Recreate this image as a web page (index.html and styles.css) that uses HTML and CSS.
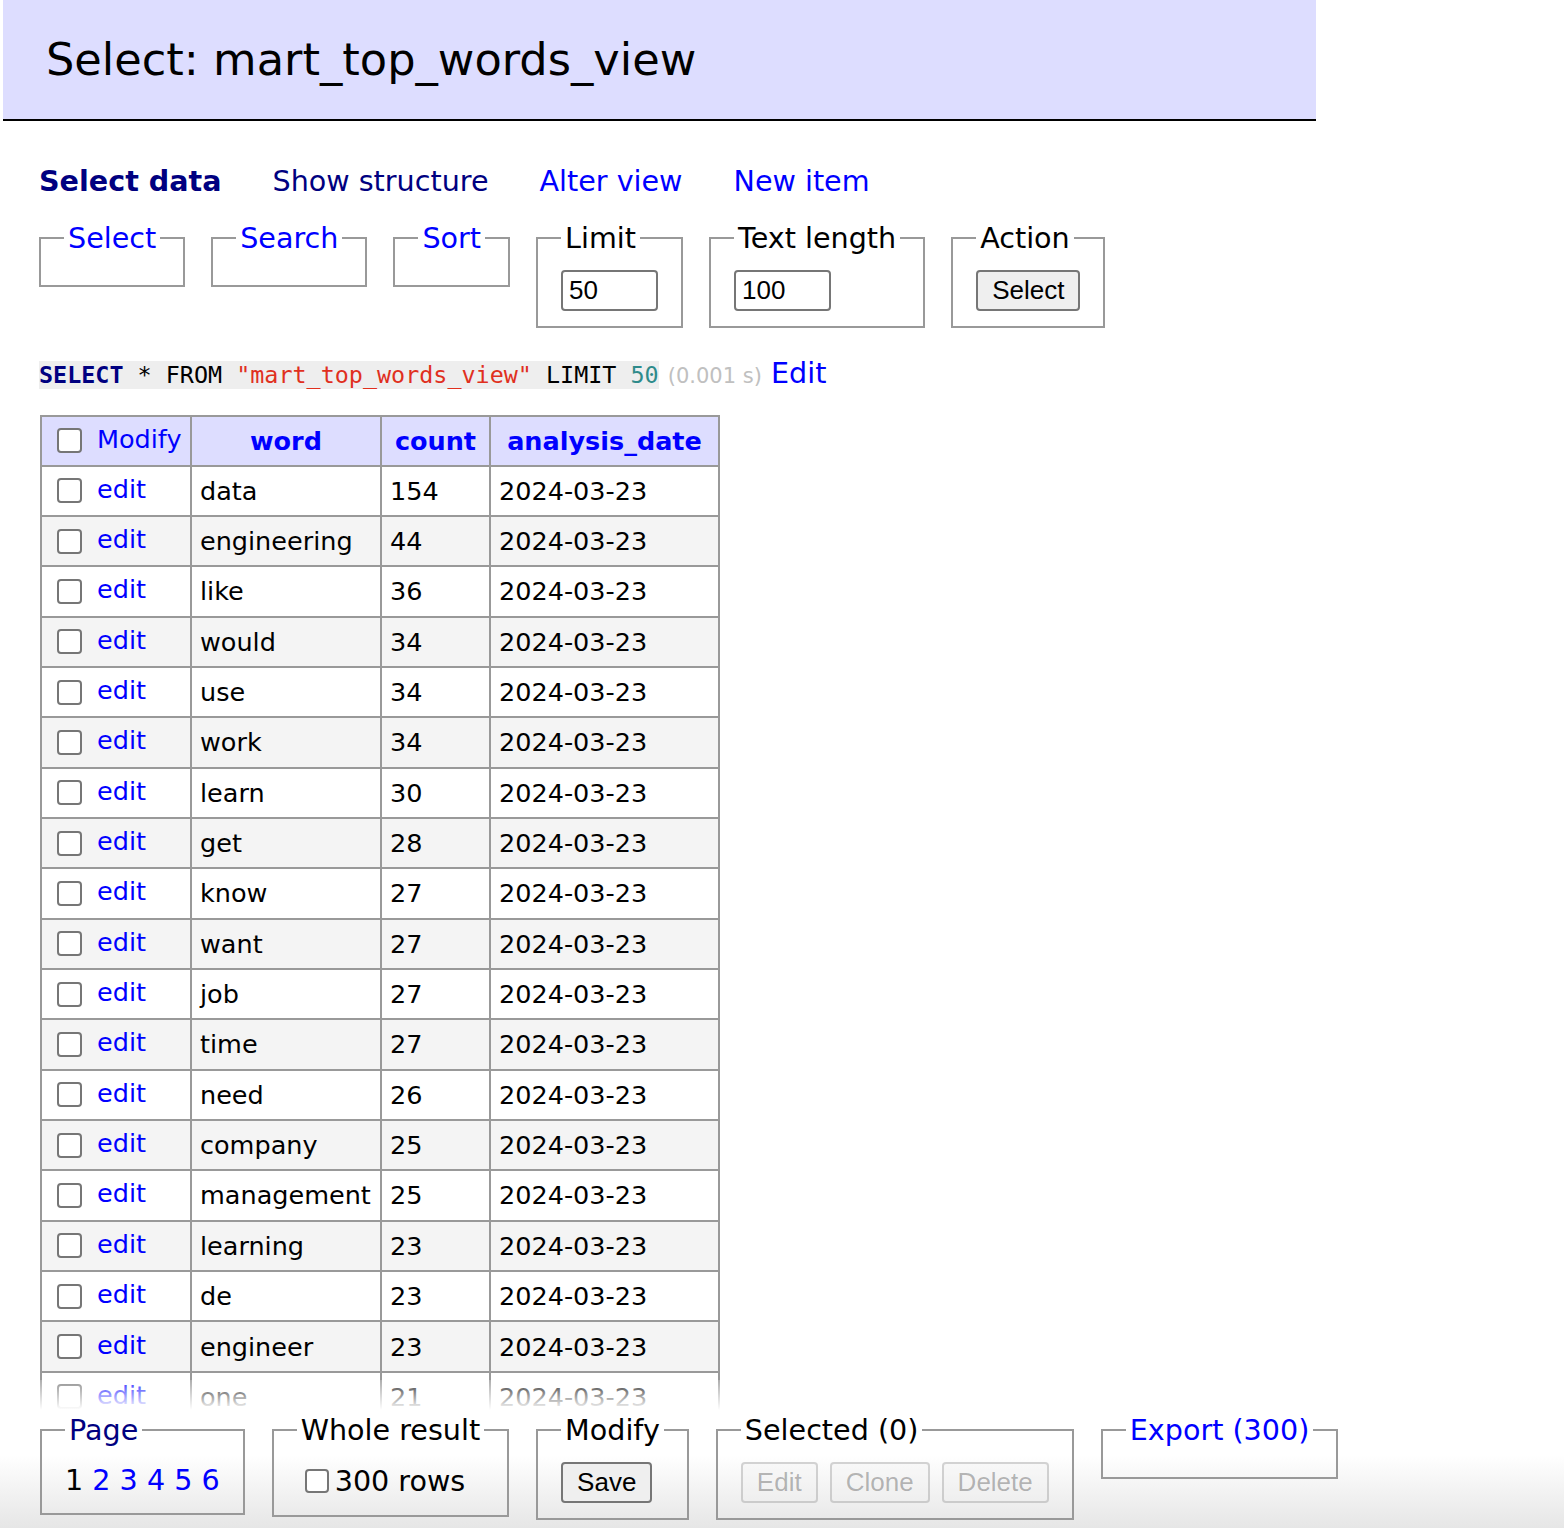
FILE: index.html
```html
<!DOCTYPE html>
<html lang="en">
<head>
<meta charset="utf-8">
<title>Select: mart_top_words_view</title>
<link rel="stylesheet" href="styles.css">
</head>
<body>
<div class="page">
  <h2 class="title">Select: mart_top_words_view</h2>
  <div class="main">
    <p class="links">
      <a href="#" class="visited active">Select data</a>
      <a href="#" class="visited">Show structure</a>
      <a href="#">Alter view</a>
      <a href="#">New item</a>
    </p>
    <form class="filters">
      <fieldset><legend><a href="#">Select</a></legend></fieldset>
      <fieldset><legend><a href="#">Search</a></legend></fieldset>
      <fieldset><legend><a href="#">Sort</a></legend></fieldset>
      <fieldset><legend>Limit</legend><div class="fc"><input class="txt" type="text" value="50"></div></fieldset>
      <fieldset><legend>Text length</legend><div class="fc"><input class="txt" type="text" value="100"></div></fieldset>
      <fieldset><legend>Action</legend><div class="fc"><button type="button" class="btn">Select</button></div></fieldset>
    </form>
    <p class="sql"><code><span class="kw">SELECT</span> * FROM <span class="str">"mart_top_words_view"</span> LIMIT <span class="num">50</span></code> <span class="time">(0.001 s)</span> <a href="#">Edit</a></p>
    <table class="data">
      <colgroup><col class="c1"><col class="c2"><col class="c3"><col class="c4"></colgroup>
      <thead>
        <tr>
          <th class="mod"><span class="cell"><input type="checkbox" class="cb"><a href="#">Modify</a></span></th>
          <th><a href="#">word</a></th>
          <th><a href="#">count</a></th>
          <th><a href="#">analysis_date</a></th>
        </tr>
      </thead>
      <tbody>
        <tr><td class="mod"><span class="cell"><input type="checkbox" class="cb"><a href="#">edit</a></span></td><td>data</td><td>154</td><td>2024-03-23</td></tr>
        <tr><td class="mod"><span class="cell"><input type="checkbox" class="cb"><a href="#">edit</a></span></td><td>engineering</td><td>44</td><td>2024-03-23</td></tr>
        <tr><td class="mod"><span class="cell"><input type="checkbox" class="cb"><a href="#">edit</a></span></td><td>like</td><td>36</td><td>2024-03-23</td></tr>
        <tr><td class="mod"><span class="cell"><input type="checkbox" class="cb"><a href="#">edit</a></span></td><td>would</td><td>34</td><td>2024-03-23</td></tr>
        <tr><td class="mod"><span class="cell"><input type="checkbox" class="cb"><a href="#">edit</a></span></td><td>use</td><td>34</td><td>2024-03-23</td></tr>
        <tr><td class="mod"><span class="cell"><input type="checkbox" class="cb"><a href="#">edit</a></span></td><td>work</td><td>34</td><td>2024-03-23</td></tr>
        <tr><td class="mod"><span class="cell"><input type="checkbox" class="cb"><a href="#">edit</a></span></td><td>learn</td><td>30</td><td>2024-03-23</td></tr>
        <tr><td class="mod"><span class="cell"><input type="checkbox" class="cb"><a href="#">edit</a></span></td><td>get</td><td>28</td><td>2024-03-23</td></tr>
        <tr><td class="mod"><span class="cell"><input type="checkbox" class="cb"><a href="#">edit</a></span></td><td>know</td><td>27</td><td>2024-03-23</td></tr>
        <tr><td class="mod"><span class="cell"><input type="checkbox" class="cb"><a href="#">edit</a></span></td><td>want</td><td>27</td><td>2024-03-23</td></tr>
        <tr><td class="mod"><span class="cell"><input type="checkbox" class="cb"><a href="#">edit</a></span></td><td>job</td><td>27</td><td>2024-03-23</td></tr>
        <tr><td class="mod"><span class="cell"><input type="checkbox" class="cb"><a href="#">edit</a></span></td><td>time</td><td>27</td><td>2024-03-23</td></tr>
        <tr><td class="mod"><span class="cell"><input type="checkbox" class="cb"><a href="#">edit</a></span></td><td>need</td><td>26</td><td>2024-03-23</td></tr>
        <tr><td class="mod"><span class="cell"><input type="checkbox" class="cb"><a href="#">edit</a></span></td><td>company</td><td>25</td><td>2024-03-23</td></tr>
        <tr><td class="mod"><span class="cell"><input type="checkbox" class="cb"><a href="#">edit</a></span></td><td>management</td><td>25</td><td>2024-03-23</td></tr>
        <tr><td class="mod"><span class="cell"><input type="checkbox" class="cb"><a href="#">edit</a></span></td><td>learning</td><td>23</td><td>2024-03-23</td></tr>
        <tr><td class="mod"><span class="cell"><input type="checkbox" class="cb"><a href="#">edit</a></span></td><td>de</td><td>23</td><td>2024-03-23</td></tr>
        <tr><td class="mod"><span class="cell"><input type="checkbox" class="cb"><a href="#">edit</a></span></td><td>engineer</td><td>23</td><td>2024-03-23</td></tr>
        <tr><td class="mod"><span class="cell"><input type="checkbox" class="cb"><a href="#">edit</a></span></td><td>one</td><td>21</td><td>2024-03-23</td></tr>
      </tbody>
    </table>
  </div>
  <div class="footer">
    <fieldset><legend><a href="#" class="visited">Page</a></legend><div class="fc pages">1 <a href="#">2</a> <a href="#">3</a> <a href="#">4</a> <a href="#">5</a> <a href="#">6</a></div></fieldset>
    <fieldset><legend>Whole result</legend><div class="fc"><label class="whole"><input type="checkbox" class="cb cb-w">300 rows</label></div></fieldset>
    <fieldset><legend>Modify</legend><div class="fc"><button type="button" class="btn">Save</button></div></fieldset>
    <fieldset><legend>Selected (0)</legend><div class="fc"><button type="button" class="btn" disabled>Edit</button><button type="button" class="btn" disabled>Clone</button><button type="button" class="btn" disabled>Delete</button></div></fieldset>
    <fieldset><legend><a href="#">Export (300)</a></legend></fieldset>
  </div>
</div>
</body>
</html>
```
FILE: styles.css
```css
* { box-sizing: border-box; }
html, body { margin: 0; padding: 0; background: #fff; }
body {
  font-family: "DejaVu Sans", Verdana, sans-serif;
  font-size: 28.6px;
  line-height: 36px;
  color: #000;
}
a { color: #00f; text-decoration: none; }
a.visited { color: #000080; }

.page {
  height: 1528px;
  display: flex;
  flex-direction: column;
  overflow: hidden;
}

.title {
  flex: none;
  margin: 0 0 0 3px;
  width: 1313px;
  height: 121px;
  padding: 33px 43px 0;
  background: #ddf;
  border-bottom: 2px solid #000;
  font-size: 44.7px;
  line-height: 54px;
  font-weight: normal;
}

.main {
  flex: 1;
  min-height: 0;
  overflow: hidden;
  padding-left: 39px;
}

.links {
  margin: 42px 0 0;
  display: flex;
  gap: 51px;
}
.links .active { font-weight: bold; }

.filters {
  display: flex;
  align-items: flex-start;
  gap: 26px;
  margin-top: 21px;
}

fieldset {
  margin: 0;
  min-width: 0;
  border: 2px solid #999;
  padding: 14px 23px 15px;
}
legend {
  padding: 0 4px;
  line-height: 36px;
}

.fc {
  display: flex;
  align-items: center;
  gap: 12px;
}

.txt {
  width: 97px;
  height: 41px;
  padding: 0 6px;
  font: 26px "Liberation Sans", Arial, sans-serif;
  color: #000;
  border: 2px solid #767676;
  border-radius: 4px;
  background: #fff;
}

.btn {
  height: 41px;
  padding: 0 14px;
  font: 26px "Liberation Sans", Arial, sans-serif;
  color: #000;
  background: #efefef;
  border: 2px solid #767676;
  border-radius: 4px;
}
.btn:disabled {
  color: rgba(16, 16, 16, 0.3);
  background: rgba(239, 239, 239, 0.3);
  border-color: rgba(118, 118, 118, 0.3);
}

.sql { margin: 27px 0 0; }
.sql code {
  font-family: "DejaVu Sans Mono", monospace;
  font-size: 23.4px;
  background: #eee;
}
.kw { color: #000080; font-weight: bold; }
.str { color: #e0301e; }
.num { color: #2e8b8b; }
.time { color: #c0c0c0; font-size: 21px; }

.data {
  margin: 21px 0 0 1px;
  border-spacing: 0;
  table-layout: fixed;
  width: 680px;
  border-top: 2px solid #999;
  border-left: 2px solid #999;
  font-size: 25.5px;
  line-height: 32px;
}
.c1 { width: 150px; }
.c2 { width: 190px; }
.c3 { width: 109px; }
.c4 { width: 229px; }
.data th, .data td {
  border-right: 2px solid #999;
  border-bottom: 2px solid #999;
  padding: 0 8px;
  vertical-align: middle;
  white-space: nowrap;
  overflow: hidden;
}
.data thead tr { height: 49.5px; }
.data tbody tr { height: 50.35px; }
.data th { background: #ddf; font-weight: bold; text-align: center; }
.data th.mod { font-weight: normal; text-align: left; }
.data tbody tr:nth-child(even) td { background: #f4f4f4; }

.cell {
  display: flex;
  align-items: center;
}
.cell a { position: relative; top: -2px; }
.cb {
  appearance: none;
  -webkit-appearance: none;
  flex: none;
  width: 25px;
  height: 25px;
  margin: 0 15px 0 7px;
  border: 2px solid #767676;
  border-radius: 4px;
  background: #fff;
}

.footer {
  flex: none;
  position: relative;
  height: 118px;
  padding: 2px 0 0 40px;
  display: flex;
  align-items: flex-start;
  gap: 27px;
  background: linear-gradient(#fff 0, #fff 45px, #e6e6e6 100%);
}
.footer::before {
  content: "";
  position: absolute;
  left: 0;
  right: 0;
  top: -30px;
  height: 30px;
  background: linear-gradient(rgba(255, 255, 255, 0.2), #fff);
}
.pages { white-space: pre; display: block; }
.whole {
  display: flex;
  align-items: center;
  height: 38px;
}
.cb-w { width: 24px; height: 24px; margin: 0 6px 0 8px; }
```
